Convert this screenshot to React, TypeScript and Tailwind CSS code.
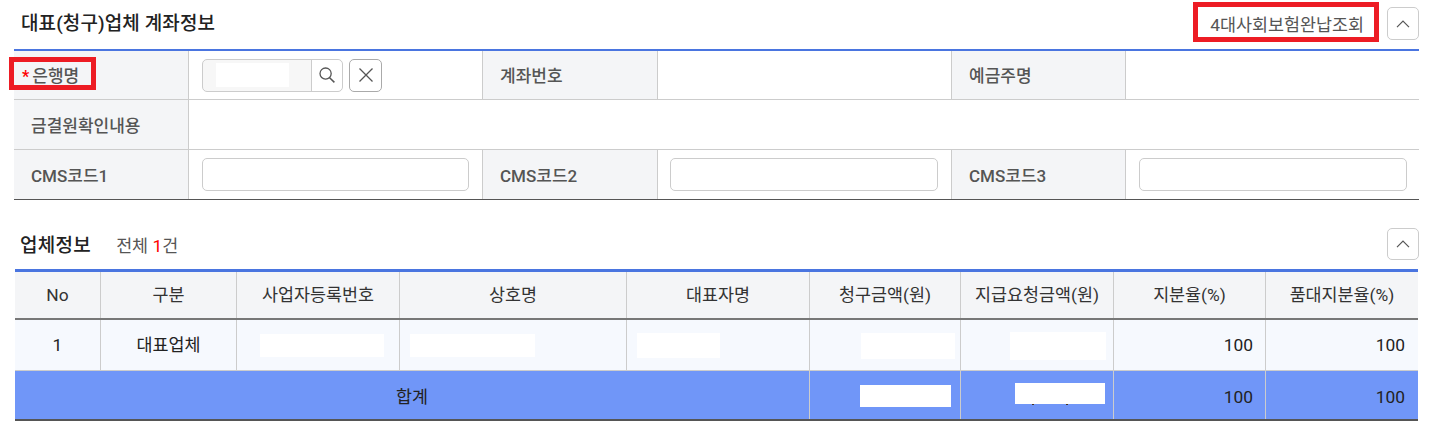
const labelCell = 'flex items-center bg-[#f4f5f7] border-r border-[#cccccc] pl-[17px] pt-[4px] text-[17px] font-medium text-[#555555]';
const valueCell = 'flex items-center bg-white border-r border-[#cccccc] last:border-r-0';
const inputBox = 'block w-full h-[33px] rounded-[5px] border border-[#cccccc] bg-white';

const SearchIcon = () => (
  <svg width="20" height="20" viewBox="0 0 20 20" fill="none" stroke="#555555" strokeWidth="1.3">
    <circle cx="8.6" cy="8.6" r="5.6" />
    <path d="M12.6 12.8 L17.4 17.4" strokeWidth="1.5" />
  </svg>
);

const CloseIcon = () => (
  <svg width="16" height="16" viewBox="0 0 16 16" fill="none" stroke="#555555" strokeWidth="1.3">
    <path d="M1.5 1.5 L14.5 14.5 M14.5 1.5 L1.5 14.5" />
  </svg>
);

const ChevronUpIcon = () => (
  <svg width="14" height="8" viewBox="0 0 14 8" fill="none" stroke="#555555" strokeWidth="1.2">
    <path d="M1 7.2 L7 1.2 L13 7.2" />
  </svg>
);

const CollapseButton = ({ height }: { height: string }) => (
  <button className={`flex ${height} w-[32px] items-center justify-center rounded-[5px] border border-[#cccccc] bg-white`}>
    <ChevronUpIcon />
  </button>
);

const Blank = ({ className }: { className: string }) => <div className={`bg-white ${className}`} />;

const headers = ['No', '구분', '사업자등록번호', '상호명', '대표자명', '청구금액(원)', '지급요청금액(원)', '지분율(%)', '품대지분율(%)'];

const bodyCell = 'flex items-center border-r border-[#cccccc] last:border-r-0 pt-[1px]';
const tableCols = 'grid grid-cols-[86px_136px_163px_227px_183px_151px_153px_152px_152px]';

export default function App() {
  return (
    <div className="h-[433px] w-[1434px] overflow-hidden bg-white font-['Roboto','Noto_Sans_CJK_KR',sans-serif]">
      {/* 계좌정보 */}
      <div className="ml-[14px] w-[1405px] pt-[7px]">
        <div className="flex h-[33px] items-center justify-between pl-[7px]">
          <h2 className="pt-[2px] text-[19px] font-medium tracking-[0.1px] text-[#222222]">대표(청구)업체 계좌정보</h2>
          <div className="flex items-center gap-[8px]">
            <div className="relative flex h-[33px] items-center pl-[1px] pr-[15px] pt-[4px] text-[17.4px] text-[#555555]">
              4대사회보험완납조회
              <div className="absolute left-[-16px] right-0 top-[-5px] h-[40px] border-[5px] border-[#ed1c24]" />
            </div>
            <CollapseButton height="h-[33px]" />
          </div>
        </div>

        <div className="mt-[9px] border-t-2 border-[#4a75e0]">
          <div className="grid h-[49px] grid-cols-[175px_294px_175px_294px_174px_293px] border-b border-[#cccccc]">
            <div className={`${labelCell} relative !pl-[8px]`}>
              <span className="mr-[3px] text-[16px] font-bold text-[#ff0000]">*</span>
              은행명
              <div className="absolute left-[-5px] top-[6px] h-[33px] w-[87px] border-[5px] border-[#ed1c24]" />
            </div>
            <div className={`${valueCell} pl-[13px]`}>
              <div className="flex h-[33px] w-[141px] rounded-[5px] border border-[#cccccc] bg-[#f7f7f7]">
                <Blank className="ml-[13px] mt-[3px] h-[24px] w-[73px]" />
                <div className="ml-auto flex w-[31px] items-center justify-center rounded-r-[5px] border-l border-[#cccccc] bg-white">
                  <SearchIcon />
                </div>
              </div>
              <button className="ml-[6px] flex h-[33px] w-[33px] items-center justify-center rounded-[5px] border border-[#aaaaaa] bg-white">
                <CloseIcon />
              </button>
            </div>
            <div className={labelCell}>계좌번호</div>
            <div className={valueCell} />
            <div className={labelCell}>예금주명</div>
            <div className={valueCell} />
          </div>

          <div className="grid h-[50px] grid-cols-[175px_1fr] border-b border-[#cccccc]">
            <div className={labelCell}>금결원확인내용</div>
            <div className="bg-white" />
          </div>

          <div className="grid h-[50px] grid-cols-[175px_294px_175px_294px_174px_293px] border-b border-[#555555]">
            <div className={labelCell}>CMS코드1</div>
            <div className={`${valueCell} pl-[13px] pr-[13px]`}>
              <input className={inputBox} />
            </div>
            <div className={labelCell}>CMS코드2</div>
            <div className={`${valueCell} pl-[12px] pr-[13px]`}>
              <input className={inputBox} />
            </div>
            <div className={labelCell}>CMS코드3</div>
            <div className={`${valueCell} pl-[13px] pr-[12px]`}>
              <input className={inputBox} />
            </div>
          </div>
        </div>
      </div>

      {/* 업체정보 */}
      <div className="ml-[15px] mt-[28px] w-[1403px]">
        <div className="flex h-[33px] items-center pl-[5px]">
          <h2 className="pt-[3px] text-[19px] font-medium tracking-[0.3px] text-[#222222]">업체정보</h2>
          <span className="ml-[25px] pt-[3px] text-[17.4px] text-[#555555]">
            전체 <span className="text-[#ff0000]">1</span>건
          </span>
          <div className="ml-auto mr-[-1px] self-start">
            <CollapseButton height="h-[32px]" />
          </div>
        </div>

        <div className="mt-[8px] border-t-[3px] border-[#4a75e0] text-[17.4px] text-[#333333]">
          <div className={`${tableCols} h-[48px] border-b-2 border-[#777777] bg-[#f4f5f7]`}>
            {headers.map((h) => (
              <div key={h} className={`${bodyCell} justify-center`}>{h}</div>
            ))}
          </div>

          <div className={`${tableCols} h-[51px] border-b border-[#cccccc] bg-[#f6f9fe] text-[#222222]`}>
            <div className={`${bodyCell} justify-center`}>1</div>
            <div className={`${bodyCell} justify-center`}>대표업체</div>
            <div className={bodyCell}><Blank className="ml-[23px] h-[23px] w-[124px]" /></div>
            <div className={bodyCell}><Blank className="ml-[10px] h-[23px] w-[125px]" /></div>
            <div className={bodyCell}><Blank className="ml-[10px] h-[25px] w-[83px]" /></div>
            <div className={bodyCell}><Blank className="ml-[51px] h-[26px] w-[94px]" /></div>
            <div className={bodyCell}><Blank className="ml-[49px] h-[28px] w-[96px]" /></div>
            <div className={`${bodyCell} justify-end pr-[12px]`}>100</div>
            <div className={`${bodyCell} justify-end pr-[13px]`}>100</div>
          </div>

          <div className={`${tableCols} h-[50px] border-b-2 border-[#555555] bg-[#7096f8] text-[#222222]`}>
            <div className={`${bodyCell} col-span-5 justify-center !pt-[4px]`}>합계</div>
            <div className={bodyCell}><Blank className="ml-[50px] h-[22px] w-[91px]" /></div>
            <div className={bodyCell}>
              <div className="mb-[3px] ml-[54px] w-[90px]">
                <Blank className="h-[21px]" />
                {/* 가림 아래로 남은 쉼표 끝 */}
                <div className="ml-[17px] flex h-[1px] gap-[32px]">
                  <span className="w-[2px] bg-[#443322]" />
                  <span className="w-[2px] bg-[#443322]" />
                </div>
              </div>
            </div>
            <div className={`${bodyCell} justify-end pr-[12px] !pt-[4px]`}>100</div>
            <div className={`${bodyCell} justify-end pr-[13px] !pt-[4px]`}>100</div>
          </div>
        </div>
      </div>
    </div>
  );
}
